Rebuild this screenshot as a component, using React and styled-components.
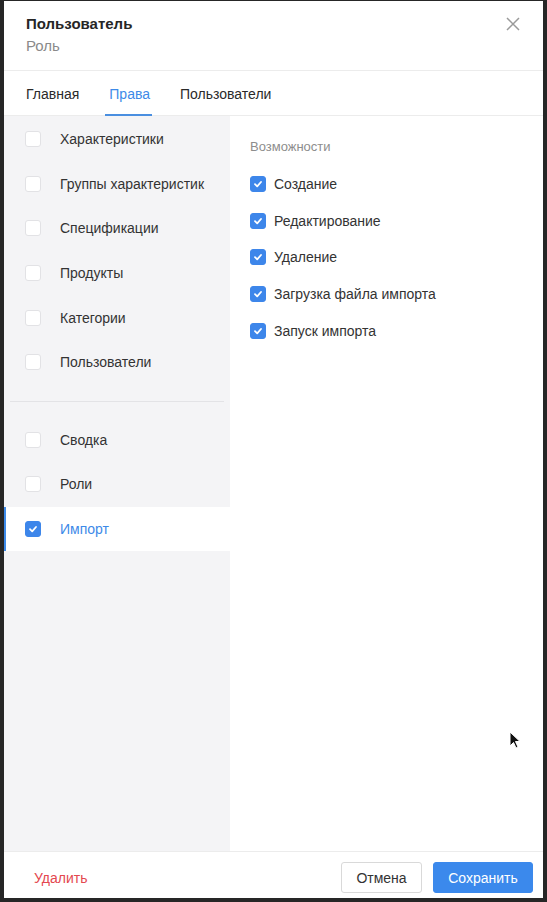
import React from 'react'
import styled, { createGlobalStyle } from 'styled-components'

const Global = createGlobalStyle`
  html, body { margin:0; padding:0; background:#262626; }
  body { font-family: "Liberation Sans", Arial, sans-serif; }
  * { box-sizing:border-box; }
`

const Frame = styled.div`
  width:547px;
  height:902px;
  padding:1px 4px 4px 4px;
  background:#262626;
`

const Modal = styled.div`
  position:relative;
  height:100%;
  background:#fff;
  display:flex;
  flex-direction:column;
  overflow:hidden;
`

const Header = styled.div`
  height:70px;
  padding:13px 22px 0 22px;
  display:flex;
  justify-content:space-between;
  border-bottom:1px solid #ececec;
`

const Title = styled.div`
  font-size:15px;
  font-weight:700;
  color:#262626;
  line-height:20px;
`

const Subtitle = styled.div`
  font-size:15px;
  color:#8a8a8a;
  line-height:20px;
  margin-top:2px;
`

const Close = styled.button`
  border:none;
  background:none;
  padding:0;
  margin-top:3px;
  width:16px;
  height:16px;
  cursor:pointer;
`

const Tabs = styled.div`
  height:45px;
  display:flex;
  gap:22px;
  padding:0 18px;
  border-bottom:1px solid #ececec;
`

const Tab = styled.div`
  position:relative;
  font-size:14px;
  line-height:45px;
  color:${p => (p.$active ? '#3d8ae8' : '#2a2a2a')};
  padding:0 4px;
  margin-top:1px;
  &:after{
    content:'';
    display:${p => (p.$active ? 'block' : 'none')};
    position:absolute;
    left:0; right:2px; bottom:-1px;
    height:2px;
    background:#4a8fe0;
  }
`

const Body = styled.div`
  flex:1;
  display:flex;
`

const Side = styled.div`
  width:226px;
  background:#f4f4f6;
  padding-top:1px;
`

const SideRow = styled.div`
  height:44.6px;
  display:flex;
  align-items:center;
  gap:19px;
  padding-left:19px;
  font-size:14px;
  color:${p => (p.$active ? '#3d8ae8' : '#333')};
  background:${p => (p.$active ? '#fff' : 'transparent')};
  border-left:2px solid ${p => (p.$active ? '#3d8ae8' : 'transparent')};
`

const SideDivider = styled.div`
  height:1px;
  background:#e3e3e6;
  margin:16px 6px 16px 6px;
`

const Box = styled.span`
  width:16px;
  height:16px;
  border-radius:3px;
  flex:none;
  display:flex;
  align-items:center;
  justify-content:center;
  background:${p => (p.$on ? '#3d86ea' : '#fff')};
  border:1px solid ${p => (p.$on ? '#3d86ea' : '#e2e2e5')};
`

const Main = styled.div`
  flex:1;
  padding:22px 20px;
`

const Caption = styled.div`
  font-size:13px;
  color:#8d8d8d;
  margin-bottom:10px;
  line-height:18px;
`

const Perm = styled.div`
  height:36.6px;
  display:flex;
  align-items:center;
  gap:8px;
  font-size:14px;
  color:#333;
`

const Footer = styled.div`
  height:47px;
  border-top:1px solid #ececec;
  display:flex;
  align-items:center;
  padding:5px 10px 0 30px;
`

const Danger = styled.button`
  border:none;
  background:none;
  font:inherit;
  font-size:14px;
  color:#e4484f;
  padding:0;
  margin-right:auto;
`

const Btn = styled.button`
  height:31px;
  font:inherit;
  font-size:14px;
  border-radius:3px;
  padding:0;
  width:${p => p.$w}px;
  margin-left:${p => p.$ml || 0}px;
  color:${p => (p.$primary ? '#fff' : '#333')};
  background:${p => (p.$primary ? '#3b89ec' : '#fff')};
  border:1px solid ${p => (p.$primary ? '#3b89ec' : '#d9d9d9')};
`

const Cursor = styled.svg`
  position:absolute;
  left:505px;
  top:730px;
`

const Check = () => (
  <svg width="10" height="10" viewBox="0 0 10 10">
    <path d="M2 5.2 L4.2 7.3 L8 3" fill="none" stroke="#fff" strokeWidth="1.8" strokeLinecap="round" strokeLinejoin="round" />
  </svg>
)

const groupA = ['Характеристики', 'Группы характеристик', 'Спецификации', 'Продукты', 'Категории', 'Пользователи']
const groupB = ['Сводка', 'Роли', 'Импорт']
const perms = ['Создание', 'Редактирование', 'Удаление', 'Загрузка файла импорта', 'Запуск импорта']

export default function App() {
  return (
    <Frame>
      <Global />
      <Modal>
        <Header>
          <div>
            <Title>Пользователь</Title>
            <Subtitle>Роль</Subtitle>
          </div>
          <Close>
            <svg width="14" height="14" viewBox="0 0 14 14">
              <path d="M1 1 L13 13 M13 1 L1 13" stroke="#9a9a9a" strokeWidth="1.5" />
            </svg>
          </Close>
        </Header>
        <Tabs>
          <Tab>Главная</Tab>
          <Tab $active>Права</Tab>
          <Tab>Пользователи</Tab>
        </Tabs>
        <Body>
          <Side>
            {groupA.map(t => (
              <SideRow key={t}><Box />{t}</SideRow>
            ))}
            <SideDivider />
            {groupB.map(t => (
              <SideRow key={t} $active={t === 'Импорт'}>
                <Box $on={t === 'Импорт'}>{t === 'Импорт' && <Check />}</Box>{t}
              </SideRow>
            ))}
          </Side>
          <Main>
            <Caption>Возможности</Caption>
            {perms.map(t => (
              <Perm key={t}><Box $on><Check /></Box>{t}</Perm>
            ))}
          </Main>
        </Body>
        <Footer>
          <Danger>Удалить</Danger>
          <Btn $w={81}>Отмена</Btn>
          <Btn $primary $w={100} $ml={11}>Сохранить</Btn>
        </Footer>
        <Cursor width="14" height="20" viewBox="0 0 14 20">
          <path d="M1 1 L1 15 L4.5 11.5 L7 17 L9 16 L6.5 10.5 L11 10.5 Z" fill="#111" stroke="#fff" strokeWidth="1" />
        </Cursor>
      </Modal>
    </Frame>
  )
}
